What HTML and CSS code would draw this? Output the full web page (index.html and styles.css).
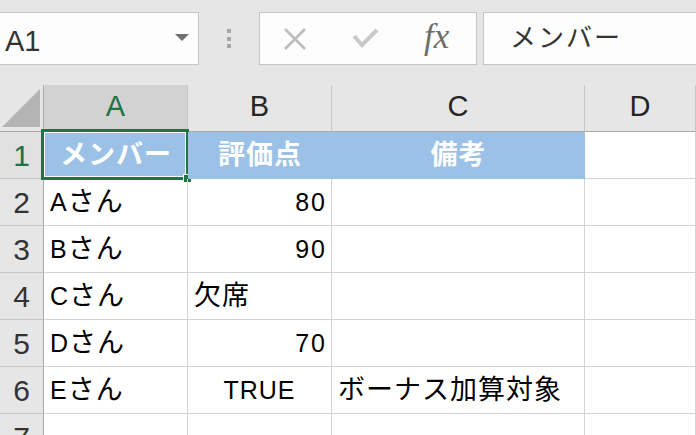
FILE: index.html
```html
<!DOCTYPE html>
<html lang="ja">
<head>
    <meta charset="UTF-8">
    <title>Sheet1</title>
    <link rel="stylesheet" href="styles.css">
</head>
<body>
    <div class="toolbar">
        <div class="namebox">
            <span>A1</span>
            <svg class="drop" width="14" height="7" viewBox="0 0 14 7"><polygon points="0,0 14,0 7,7" fill="#707070"/></svg>
        </div>
        <div class="grip"><i></i><i></i><i></i></div>
        <div class="fx-buttons">
            <div class="slot">
                <svg width="24" height="24" viewBox="0 0 24 24"><path d="M2 2 L22 22 M22 2 L2 22" stroke="#bdbdbd" stroke-width="2.6" fill="none"/></svg>
            </div>
            <div class="slot">
                <svg width="28" height="22" viewBox="0 0 28 22"><path d="M2 8 L10 17 L25 2" stroke="#c8c8c8" stroke-width="4" fill="none"/></svg>
            </div>
            <div class="slot fx">fx</div>
        </div>
        <div class="formula"><span class="jp">メンバー</span></div>
    </div>

    <div class="sheet">
        <!-- column headers -->
        <div class="corner">
            <svg width="43" height="46" viewBox="0 0 43 46"><polygon points="2,42 40,42 40,4" fill="#b4b4b4"/></svg>
        </div>
        <div class="ch active">A</div>
        <div class="ch">B</div>
        <div class="ch">C</div>
        <div class="ch">D</div>

        <!-- row 1 -->
        <div class="rh active">1</div>
        <div class="cell head selected">
            <span class="jp">メンバー</span>
            <div class="sel-box"><div class="handle"></div></div>
        </div>
        <div class="cell head"><span class="jp">評価点</span></div>
        <div class="cell head"><span class="jp">備考</span></div>
        <div class="cell"></div>

        <!-- row 2 -->
        <div class="rh">2</div>
        <div class="cell">A<span class="jp">さん</span></div>
        <div class="cell num">80</div>
        <div class="cell"></div>
        <div class="cell"></div>

        <!-- row 3 -->
        <div class="rh">3</div>
        <div class="cell">B<span class="jp">さん</span></div>
        <div class="cell num">90</div>
        <div class="cell"></div>
        <div class="cell"></div>

        <!-- row 4 -->
        <div class="rh">4</div>
        <div class="cell">C<span class="jp">さん</span></div>
        <div class="cell"><span class="jp">欠席</span></div>
        <div class="cell"></div>
        <div class="cell"></div>

        <!-- row 5 -->
        <div class="rh">5</div>
        <div class="cell">D<span class="jp">さん</span></div>
        <div class="cell num">70</div>
        <div class="cell"></div>
        <div class="cell"></div>

        <!-- row 6 -->
        <div class="rh">6</div>
        <div class="cell">E<span class="jp">さん</span></div>
        <div class="cell bool">TRUE</div>
        <div class="cell"><span class="jp">ボーナス加算対象</span></div>
        <div class="cell"></div>

        <!-- row 7 -->
        <div class="rh">7</div>
        <div class="cell"></div>
        <div class="cell"></div>
        <div class="cell"></div>
        <div class="cell"></div>
    </div>
</body>
</html>
```

FILE: styles.css
```css
html, body {
    margin: 0;
    height: 100%;
    overflow: hidden;
}

body {
    font-family: "Liberation Sans", "Noto Sans CJK JP", sans-serif;
    background-color: #ffffff;
    color: #000;
}

/* formula bar */
.toolbar {
    height: 85px;
    box-sizing: border-box;
    padding-top: 12px;
    background-color: #e6e6e6;
    display: flex;
    align-items: flex-start;
}

.namebox {
    width: 200px;
    height: 53px;
    margin-left: -1px;
    box-sizing: border-box;
    border: 1px solid #c6c6c6;
    background-color: #fdfdfd;
    display: flex;
    align-items: center;
    justify-content: space-between;
    padding: 6px 9px 0 5px;
    font-size: 29px;
    color: #333;
}

.namebox .drop {
    margin-top: -8px;
}

.grip {
    width: 60px;
    height: 53px;
    display: flex;
    flex-direction: column;
    align-items: center;
    justify-content: center;
    gap: 3.5px;
}

.grip i {
    display: block;
    width: 4px;
    height: 4px;
    background-color: #a6a6a6;
}

.fx-buttons {
    width: 218px;
    height: 53px;
    box-sizing: border-box;
    border: 1px solid #c6c6c6;
    background-color: #fdfdfd;
    display: flex;
}

.slot {
    width: 72px;
    display: flex;
    align-items: center;
    justify-content: center;
}

.fx {
    font-family: "Liberation Serif", serif;
    font-style: italic;
    font-size: 35px;
    color: #6d6d6d;
    padding: 0 4px 4px 0;
}

.formula {
    flex: 1;
    height: 53px;
    margin-left: 6px;
    margin-right: -2px;
    box-sizing: border-box;
    border: 1px solid #c6c6c6;
    background-color: #fdfdfd;
    padding: 7px 0 0 26px;
    font-size: 25px;
    line-height: 36px;
    color: #333;
}

.formula .jp {
    font-size: 26px;
    letter-spacing: 2px;
}

/* grid */
.sheet {
    display: grid;
    grid-template-columns: 44px 144px 144px 253px 1fr;
    grid-auto-rows: 47px;
}

.sheet > div {
    box-sizing: border-box;
    border-right: 1px solid #d4d4d4;
    border-bottom: 1px solid #d4d4d4;
}

.corner {
    background-color: #e6e6e6;
    border-right-color: #ababab !important;
    border-bottom-color: #ababab !important;
}

.corner svg {
    display: block;
}

.ch {
    background-color: #e6e6e6;
    border-right-color: #c6c6c6 !important;
    border-bottom-color: #ababab !important;
    text-align: center;
    font-size: 29px;
    line-height: 42px;
    color: #262626;
}

.rh {
    background-color: #e6e6e6;
    border-right-color: #ababab !important;
    border-bottom-color: #c6c6c6 !important;
    text-align: center;
    font-size: 30px;
    line-height: 42px;
    padding-top: 3px;
    color: #333;
}

.ch.active {
    background-color: #d2d2d2;
    color: #217346;
}

.rh.active {
    background-color: #e1e1e1;
    color: #217346;
}

.cell {
    position: relative;
    font-size: 25px;
    line-height: 42px;
    padding: 2px 6px 0 6px;
    white-space: nowrap;
    letter-spacing: 1px;
}

.jp {
    font-size: 27px;
    letter-spacing: 1px;
    margin-right: -1px;
    line-height: 1;
}

.num {
    text-align: right;
    letter-spacing: 2px;
    padding-right: 4px;
}

.bool {
    text-align: center;
}

.head {
    background-color: #9bc2e6;
    border-color: #9bc2e6 !important;
    color: #ffffff;
    font-weight: bold;
    text-align: center;
}

/* active cell outline */
.sel-box {
    position: absolute;
    left: -3px;
    top: -3px;
    right: -2px;
    bottom: -2px;
    border: 3px solid #217346;
    box-shadow: inset 0 0 0 1px #ffffff;
}

.handle {
    position: absolute;
    right: -6px;
    bottom: -6px;
    width: 7px;
    height: 7px;
    background-color: #217346;
    border: 1px solid #ffffff;
}
```
